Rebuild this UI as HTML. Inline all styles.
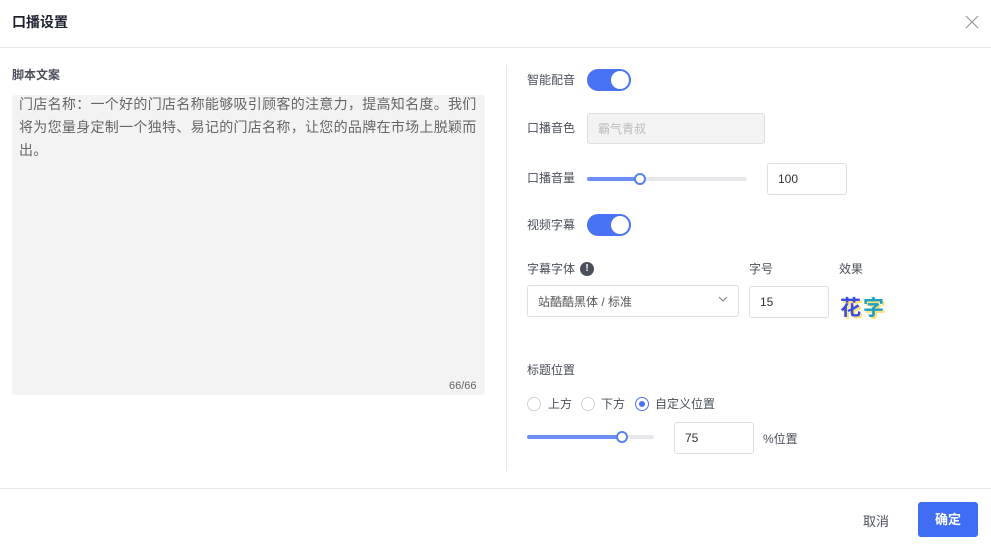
<!DOCTYPE html>
<html><head><meta charset="utf-8"><style>
*{box-sizing:border-box;margin:0;padding:0}
body{width:991px;height:545px;background:#fff;font-family:"Liberation Sans","Noto Sans CJK SC",sans-serif;position:relative;overflow:hidden;color:#333;font-size:12px}
.a{position:absolute}
.lbl{font-size:12px;color:#4a4f5a;line-height:16px}
.toggle{width:44px;height:22px;border-radius:11px;background:#4a72f5}
.toggle:after{content:"";position:absolute;right:2px;top:2px;width:18px;height:18px;border-radius:50%;background:#fff}
.inp{border:1px solid #dcdfe6;border-radius:3px;background:#fff;font-size:12px;color:#333;padding-left:10px;display:flex;align-items:center}
.track{height:4px;border-radius:2px;background:#e6e8eb}
.fill{height:4px;border-radius:2px;background:#6a8ef5}
.thumb{width:12px;height:12px;border-radius:50%;background:#fff;border:2px solid #5b82f5}
.radio{width:14px;height:14px;border-radius:50%;border:1px solid #d0d3d9;background:#fff}
</style></head><body>
<div class="a" style="left:12px;top:12px;font-size:14px;font-weight:bold;color:#1f2330">口播设置</div>
<svg class="a" style="left:965px;top:15px" width="14" height="14" viewBox="0 0 14 14"><path d="M1 1L13 13M13 1L1 13" stroke="#999" stroke-width="1.2"/></svg>
<div class="a" style="left:0;top:47px;width:991px;height:1px;background:#e8e8e8"></div>
<div class="a" style="left:12px;top:66px;font-size:12px;font-weight:bold;color:#4a4f5a">脚本文案</div>
<div class="a" style="left:12px;top:95px;width:473px;height:300px;background:#f3f3f3;border-radius:3px"></div>
<div class="a" style="left:19px;top:93px;width:468px;font-size:14px;letter-spacing:0.3px;line-height:23px;color:#666">门店名称：一个好的门店名称能够吸引顾客的注意力，提高知名度。我们将为您量身定制一个独特、易记的门店名称，让您的品牌在市场上脱颖而出。</div>
<div class="a" style="left:449px;top:380px;font-size:11px;color:#666">66/66</div>
<div class="a" style="left:506px;top:65px;width:1px;height:406px;background:#e8e8e8"></div>

<div class="a lbl" style="left:527px;top:72px">智能配音</div>
<div class="a toggle" style="left:587px;top:69px"></div>
<div class="a lbl" style="left:527px;top:120px">口播音色</div>
<div class="a inp" style="left:587px;top:113px;width:178px;height:31px;background:#f3f3f3;color:#bbb">霸气青叔</div>
<div class="a lbl" style="left:527px;top:170px">口播音量</div>
<div class="a track" style="left:587px;top:177px;width:160px"></div>
<div class="a fill" style="left:587px;top:177px;width:53px"></div>
<div class="a thumb" style="left:634px;top:173px"></div>
<div class="a inp" style="left:767px;top:163px;width:80px;height:32px">100</div>
<div class="a lbl" style="left:527px;top:217px">视频字幕</div>
<div class="a toggle" style="left:587px;top:214px"></div>

<div class="a lbl" style="left:527px;top:261px">字幕字体</div>
<div class="a" style="left:580px;top:262px;width:14px;height:14px;border-radius:50%;background:#4a4f5a;color:#fff;font-size:10px;font-weight:bold;text-align:center;line-height:14px">!</div>
<div class="a lbl" style="left:749px;top:261px">字号</div>
<div class="a lbl" style="left:839px;top:261px">效果</div>
<div class="a inp" style="left:527px;top:285px;width:212px;height:32px;color:#555">站酷酷黑体 / 标准</div>
<svg class="a" style="left:718px;top:296px" width="10" height="6" viewBox="0 0 10 6"><path d="M1 1L5 5L9 1" stroke="#888" stroke-width="1.2" fill="none"/></svg>
<div class="a inp" style="left:749px;top:286px;width:80px;height:32px">15</div>
<div class="a" style="left:840px;top:292px;font-size:21px;font-weight:bold;color:#3a4fe0;text-shadow:2px 2px 0 #ffe27a,-1px -1px 0 #fff;letter-spacing:2px">花<span style="color:#20a0c0">字</span></div>

<div class="a lbl" style="left:527px;top:362px">标题位置</div>
<div class="a radio" style="left:527px;top:397px"></div>
<div class="a lbl" style="left:548px;top:396px">上方</div>
<div class="a radio" style="left:581px;top:397px"></div>
<div class="a lbl" style="left:601px;top:396px">下方</div>
<div class="a radio" style="left:635px;top:397px;border-color:#4a72f5"></div>
<div class="a" style="left:639px;top:401px;width:6px;height:6px;border-radius:50%;background:#4a72f5"></div>
<div class="a lbl" style="left:655px;top:396px">自定义位置</div>
<div class="a track" style="left:527px;top:435px;width:127px"></div>
<div class="a fill" style="left:527px;top:435px;width:95px"></div>
<div class="a thumb" style="left:616px;top:431px"></div>
<div class="a inp" style="left:674px;top:422px;width:80px;height:32px">75</div>
<div class="a lbl" style="left:763px;top:431px">%位置</div>

<div class="a" style="left:0;top:488px;width:991px;height:1px;background:#e8e8e8"></div>
<div class="a" style="left:863px;top:511px;font-size:13px;color:#4a4f5a">取消</div>
<div class="a" style="left:918px;top:502px;width:60px;height:35px;background:#3f6ef5;border-radius:3px;color:#fff;font-size:13px;font-weight:bold;text-align:center;line-height:35px">确定</div>
</body></html>
